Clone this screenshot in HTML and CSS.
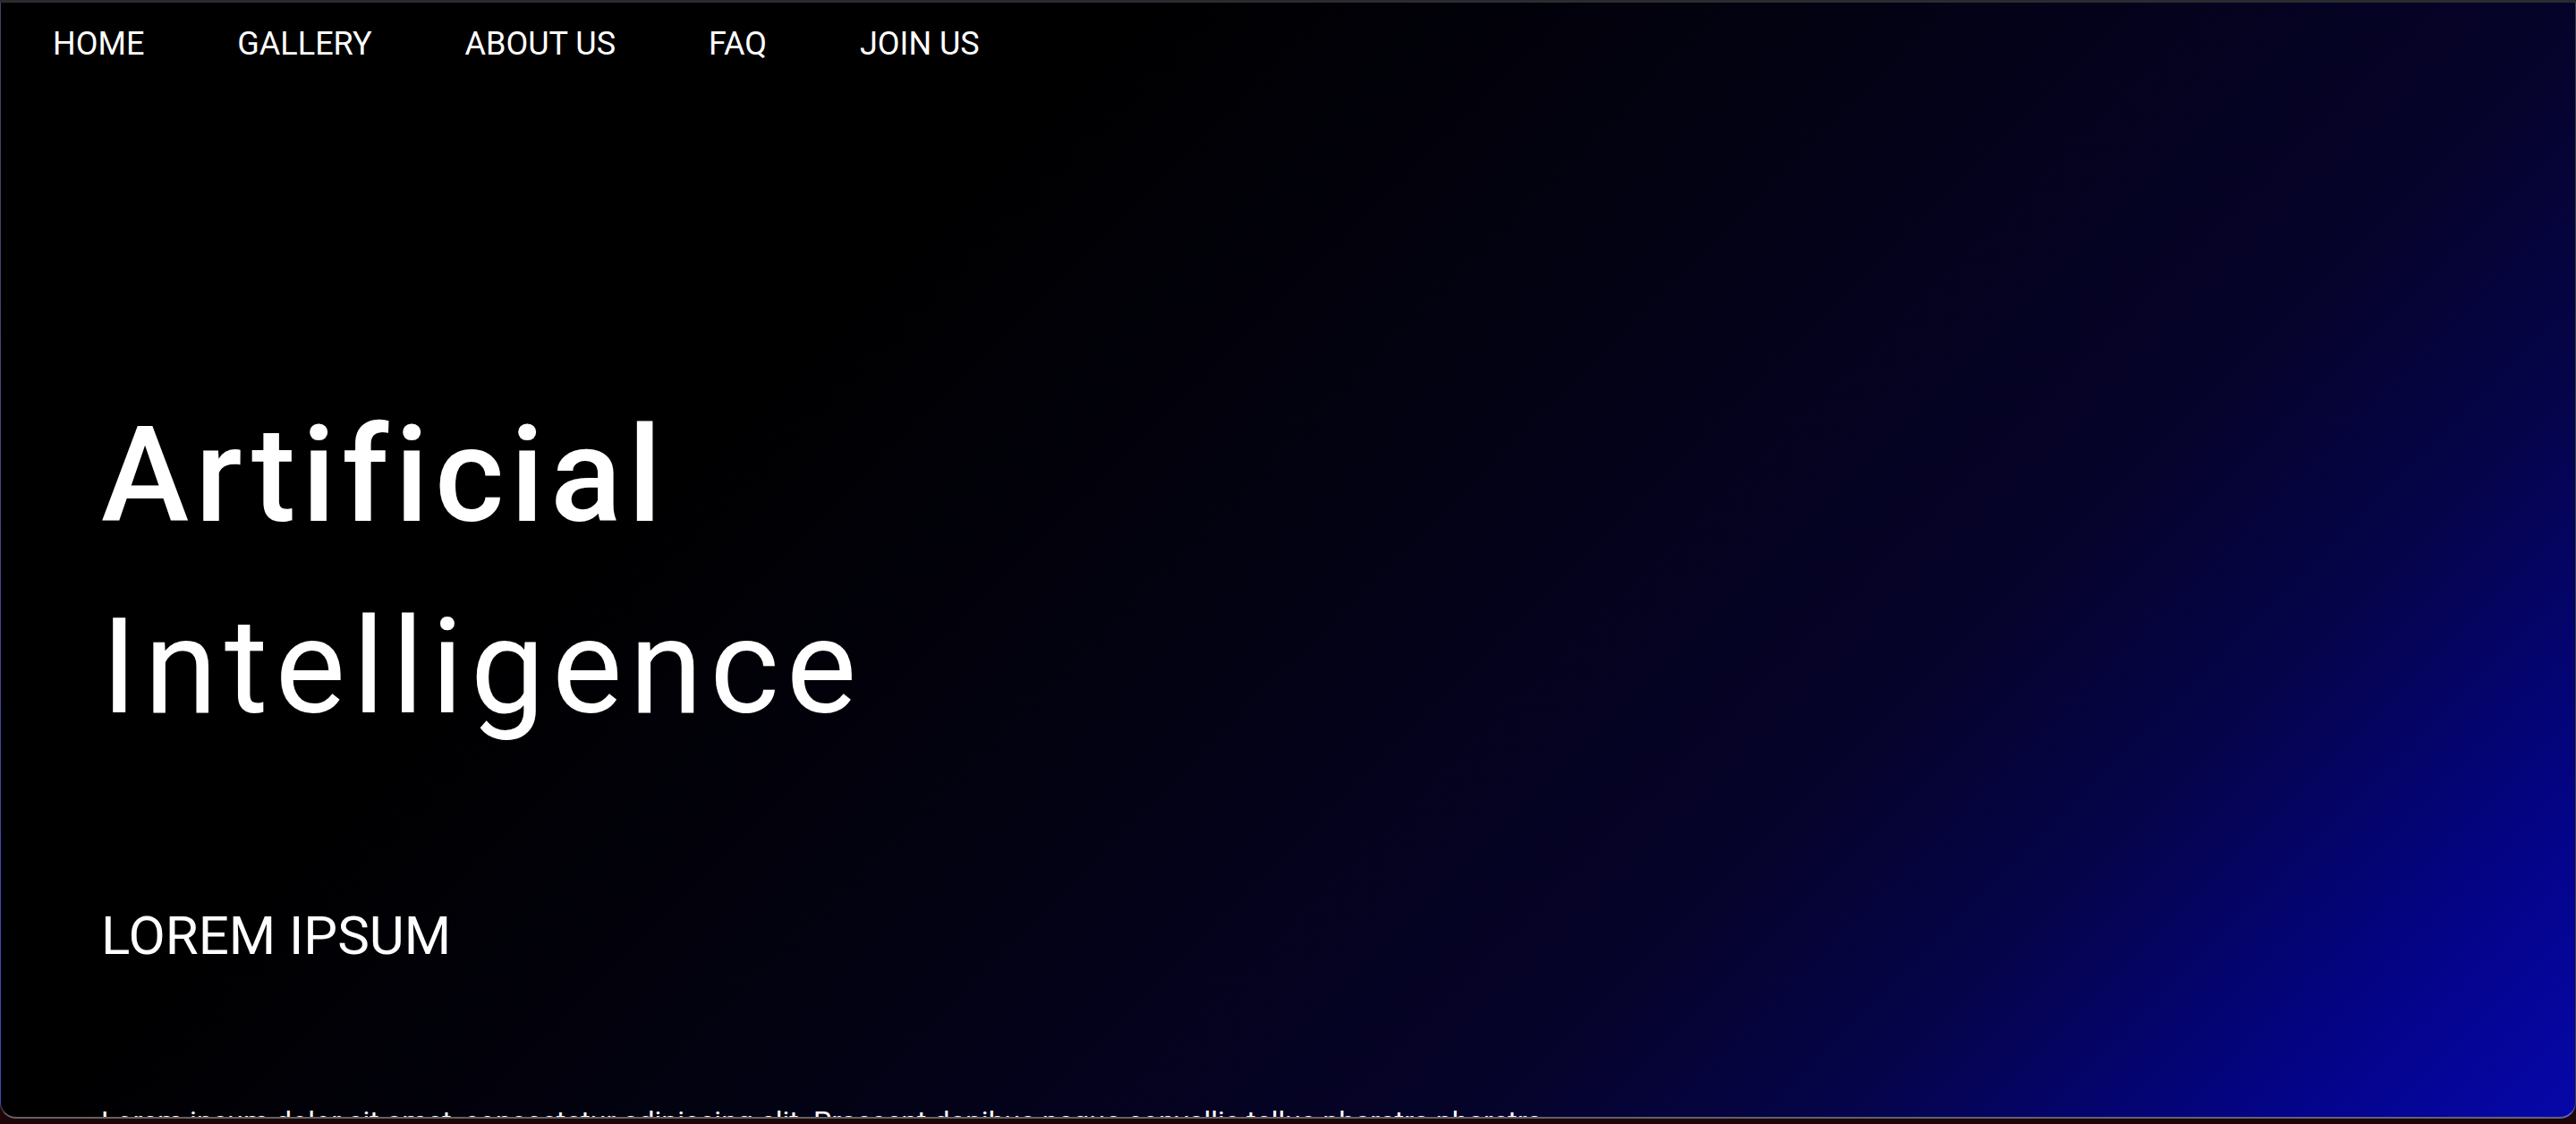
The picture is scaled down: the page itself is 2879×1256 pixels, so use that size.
FILE: index.html
```html
<!DOCTYPE html>
<html lang="en">
<head>
<meta charset="utf-8">
<title>Artificial Intelligence</title>
<link rel="stylesheet" href="styles.css">
</head>
<body>
<div class="page">
  <header class="nav">
    <a class="nav-link" href="#">HOME</a>
    <a class="nav-link" href="#">GALLERY</a>
    <a class="nav-link" href="#">ABOUT US</a>
    <a class="nav-link" href="#">FAQ</a>
    <a class="nav-link" href="#">JOIN US</a>
  </header>
  <main class="hero">
    <h1 class="title"><span class="title-strong">Artificial</span><span class="title-light">Intelligence</span></h1>
    <h2 class="subtitle">LOREM IPSUM</h2>
    <p class="text">Lorem ipsum dolor sit amet, consectetur adipiscing elit. Praesent dapibus neque convallis tellus pharetra pharetra.</p>
  </main>
</div>
</body>
</html>
```
FILE: styles.css
```css
html, body {
  margin: 0;
  padding: 0;
  height: 100%;
}
body {
  background: #1d0509;
  font-family: Roboto, "Liberation Sans", sans-serif;
  color: #fff;
  overflow: hidden;
}
.page {
  box-sizing: border-box;
  height: 1250px;
  width: 100%;
  overflow: hidden;
  border: 1px solid rgba(255, 255, 255, 0.25);
  border-top: 3px solid #2a2b30;
  border-bottom: 2px solid rgba(255, 255, 255, 0.38);
  border-radius: 0 0 18px 18px;
  background: linear-gradient(135deg, #000 0%, #000 30%, #030212 50%, #06032a 70%, #05044a 80%, #04048a 92%, #0707aa 100%);
  display: flex;
  flex-direction: column;
}
.nav {
  display: flex;
  gap: 104px;
  padding: 25px 0 0 58px;
}
.nav-link {
  color: #fff;
  text-decoration: none;
  font-size: 36px;
  line-height: 42px;
}
.hero {
  padding-left: 112px;
  display: flex;
  flex-direction: column;
}
.title {
  margin: 355px 0 0 0;
  font-size: 148px;
  line-height: 214px;
  display: flex;
  flex-direction: column;
  align-items: flex-start;
}
.title-strong {
  font-weight: 500;
  letter-spacing: 7px;
}
.title-light {
  font-weight: 400;
  letter-spacing: 8px;
}
.subtitle {
  margin: 157px 0 0 0;
  font-size: 60px;
  font-weight: 400;
  line-height: 72px;
}
.text {
  margin: 153px 0 0 0;
  font-size: 32px;
  line-height: 37px;
  max-width: 1760px;
}
```
